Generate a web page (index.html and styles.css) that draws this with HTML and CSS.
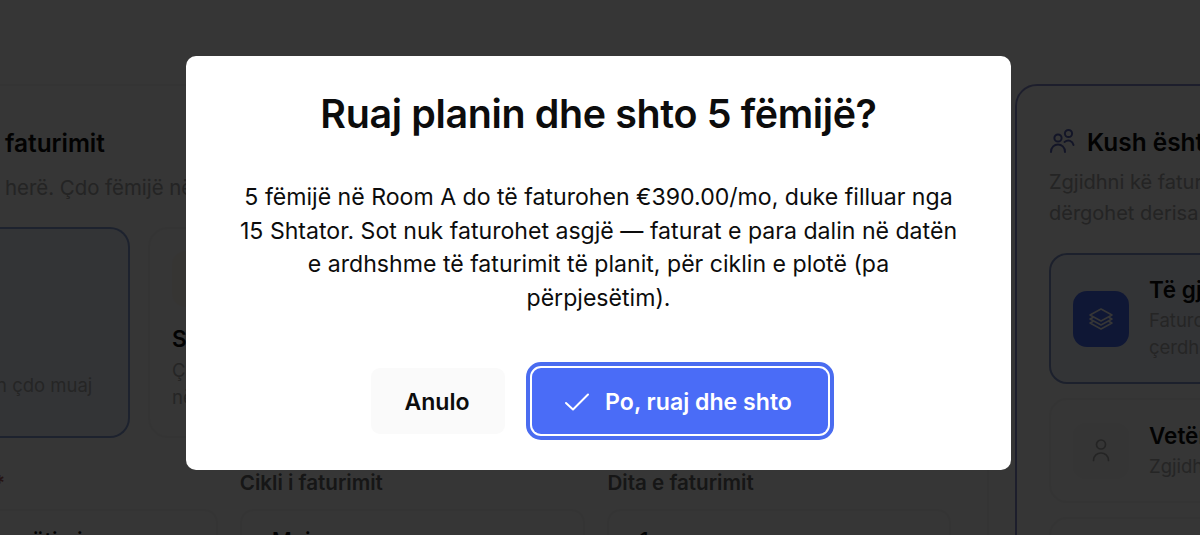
FILE: index.html
```html
<!DOCTYPE html>
<html lang="sq">
<head>
    <meta charset="UTF-8">
    <title>Plani i faturimit</title>
    <link rel="stylesheet" href="styles.css">
</head>
<body>
    <div class="page">
        <section class="panel plan">
            <h2>faturimit</h2>
            <p class="hint">herë. Çdo fëmijë në</p>
            <div class="options">
                <div class="option selected"><p>n çdo muaj</p></div>
                <div class="option">
                    <div class="option-icon"></div>
                    <h3>Si</h3>
                    <p>Ço<br>në</p>
                </div>
            </div>
            <div class="fields">
                <div class="field">
                    <label><span class="required">*</span></label>
                    <div class="select">mëtimi</div>
                </div>
                <div class="field">
                    <label>Cikli i faturimit</label>
                    <div class="select">Mujor</div>
                </div>
                <div class="field">
                    <label>Dita e faturimit</label>
                    <div class="select">1</div>
                </div>
            </div>
        </section>

        <section class="panel people">
            <h2>
                <svg width="28" height="28" viewBox="0 0 28 28" fill="none" stroke="currentColor" stroke-width="2" stroke-linecap="round">
                    <circle cx="9" cy="10" r="3.6"/>
                    <path d="M2 24c0-10 14-10 14 0"/>
                    <circle cx="19.5" cy="5.5" r="3.6"/>
                    <path d="M15.5 14c4-3 8-1 9 3"/>
                </svg>
                Kush është
            </h2>
            <p class="hint">Zgjidhni kë faturoni<br>dërgohet derisa</p>
            <div class="choice selected">
                <div class="choice-icon">
                    <svg width="28" height="28" viewBox="0 0 28 28" fill="none" stroke="currentColor" stroke-width="1.5" stroke-linejoin="round" stroke-linecap="round">
                        <path d="M14 4l11 6-11 6-11-6z"/>
                        <path d="M6 12.5l-3 1.500 11 6 11-6-3-1.500"/>
                        <path d="M6 16.5l-3 1.500 11 6 11-6-3-1.500"/>
                    </svg>
                </div>
                <div>
                    <h3>Të gjithë</h3>
                    <p>Faturoni<br>çerdhen</p>
                </div>
            </div>
            <div class="choice">
                <div class="choice-icon">
                    <svg width="28" height="28" viewBox="0 0 28 28" fill="none" stroke="currentColor" stroke-width="1.7" stroke-linecap="round">
                        <circle cx="14" cy="7.5" r="4.5"/>
                        <path d="M6.5 23.500c0-10 15-10 15 0"/>
                    </svg>
                </div>
                <div>
                    <h3>Vetëm</h3>
                    <p>Zgjidhni</p>
                </div>
            </div>
            <div class="choice"></div>
        </section>
    </div>

    <div class="overlay">
        <div class="modal">
            <h1>Ruaj planin dhe shto 5 fëmijë?</h1>
            <p>5 fëmijë në Room A do të faturohen €390.00/mo, duke filluar nga<br>15 Shtator. Sot nuk faturohet asgjë — faturat e para dalin në datën<br>e ardhshme të faturimit të planit, për ciklin e plotë (pa<br>përpjesëtim).</p>
            <div class="actions">
                <button class="cancel">Anulo</button>
                <button class="confirm">
                    <svg width="26" height="20" viewBox="0 0 26 20" fill="none" stroke="currentColor" stroke-width="2" stroke-linecap="round" stroke-linejoin="round">
                        <path d="M2 11l7 6.5L24 2.5"/>
                    </svg>
                    Po, ruaj dhe shto
                </button>
            </div>
        </div>
    </div>
</body>
</html>
```

FILE: styles.css
```css
* {
    box-sizing: border-box;
}
body {
    margin: 0;
    height: 535px;
    overflow: hidden;
    font-family: Inter, sans-serif;
    color: #0c0c0c;
    background: #fcfcfc;
}
h1, h2, h3, p {
    margin: 0;
}
.page {
    display: flex;
    gap: 26px;
    width: 1640px;
    margin-left: -20px;
    padding-top: 84px;
}
.panel {
    height: 600px;
    border: 2px solid #f5f5f5;
    border-radius: 22px;
}
.panel h2 {
    display: flex;
    align-items: center;
    gap: 10px;
    font-size: 24.4px;
    font-weight: 600;
    line-height: 32px;
}
.hint {
    color: #a8a8a8;
    font-size: 20px;
    line-height: 31px;
    white-space: nowrap;
}
.plan {
    width: 1009px;
    padding: 41px 36px 0 25px;
    border-left: none;
}
.plan .hint {
    margin-top: 13px;
    font-size: 20.4px;
}
.options {
    display: flex;
    gap: 18px;
    margin: 24px 0 0 -25px;
}
.option {
    width: 420px;
    height: 211px;
    padding: 22px 22px;
    border: 2px solid #f5f5f5;
    border-radius: 20px;
}
.option.selected {
    width: 150px;
    padding: 143px 0 0 16px;
    background: #eff5ff;
    border-color: #88a0d8;
    border-left: none;
    border-radius: 0 20px 20px 0;
}
.option h3, .choice h3 {
    font-size: 22.5px;
    font-weight: 600;
    line-height: 28px;
}
.option p, .choice p {
    color: #b0b0b0;
    font-size: 18.5px;
    line-height: 27px;
}
.option-icon {
    width: 56px;
    height: 56px;
    margin-bottom: 18px;
    border-radius: 14px;
    background: #fcf9f2;
}
.option h3 + p {
    padding-top: 4px;
}
.fields {
    display: flex;
    gap: 22px;
    margin: 30px 0 0 -25px;
}
.field {
    width: 346px;
}
.field:first-child {
    width: 238px;
}
.field:first-child label {
    padding-left: 14px;
}
.field:last-child {
    width: 344px;
}
.field label {
    display: block;
    height: 41px;
    color: #686868;
    font-size: 20.6px;
    font-weight: 600;
    line-height: 30px;
    white-space: nowrap;
}
.field .required {
    color: #b06060;
}
.select {
    height: 64px;
    padding: 16px 30px;
    border: 2px solid #f5f5f5;
    border-radius: 14px;
    font-size: 22px;
    font-weight: 500;
}
.people {
    width: 500px;
    padding: 40px 32px;
    border-color: #8990d0;
}
.people h2 svg {
    color: #5966b8;
}
.people .hint {
    margin-top: 9px;
}
.choice {
    display: flex;
    align-items: center;
    gap: 20px;
    height: 105px;
    margin-top: 14px;
    padding: 0 0 0 22px;
    border: 2px solid #f5f5f5;
    border-radius: 18px;
    white-space: nowrap;
}
.choice.selected {
    height: 131px;
    margin-top: 24px;
    background: #f0f4ff;
    border-color: #8498d0;
}
.choice p {
    padding-top: 3px;
}
.choice-icon {
    display: flex;
    align-items: center;
    justify-content: center;
    width: 56px;
    height: 56px;
    border-radius: 14px;
    color: #aaa;
    background: #f7f7f7;
}
.selected .choice-icon {
    color: #fff;
    background: #4a6cf7;
}
.overlay {
    position: fixed;
    inset: 0;
    padding: 56px 0 0 186px;
    background: rgba(0, 0, 0, 0.79);
}
.modal {
    width: 825px;
    height: 414px;
    padding: 34px 0 0;
    border-radius: 10px;
    background: #fff;
    text-align: center;
}
.modal h1 {
    font-size: 39.4px;
    font-weight: 600;
    letter-spacing: -0.35px;
    line-height: 48px;
}
.modal p {
    margin-top: 43px;
    font-size: 23.1px;
    line-height: 33.5px;
    white-space: nowrap;
}
.actions {
    display: flex;
    gap: 27px;
    margin: 53px 0 0 185px;
}
button {
    display: flex;
    align-items: center;
    justify-content: center;
    height: 66px;
    padding: 2px 2px 0 0;
    border: none;
    border-radius: 9px;
    font-family: inherit;
    font-size: 23.1px;
    font-weight: 600;
    cursor: pointer;
}
.cancel {
    width: 134px;
    color: #0c0c0c;
    background: #fafafa;
}
.confirm {
    gap: 15px;
    width: 296px;
    padding-right: 4px;
    color: #fff;
    background: #4a6cf7;
    outline: 4px solid #4a6cf0;
    outline-offset: 2px;
}
```
